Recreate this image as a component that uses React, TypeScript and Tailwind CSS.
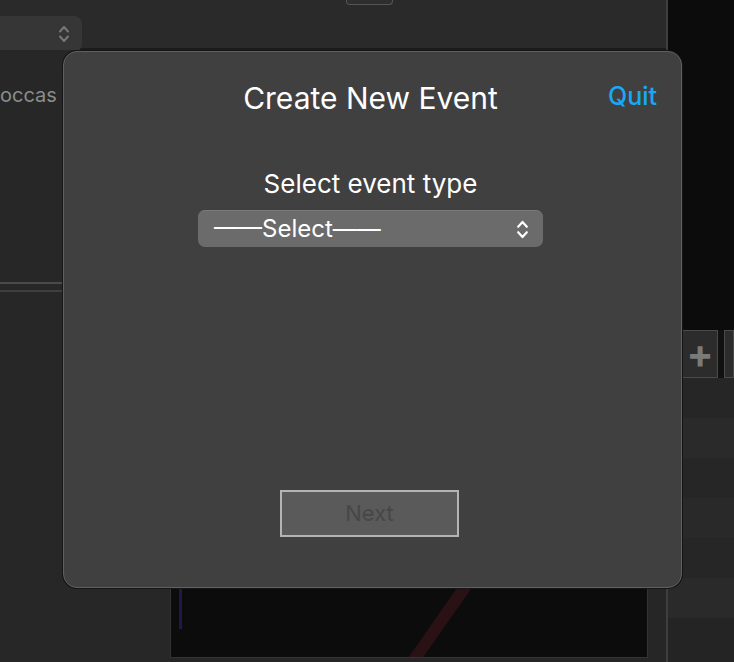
import React from 'react'

// chevron pair used by macOS popup buttons
function UpDown({ className }: { className?: string }) {
  return (
    <svg viewBox="0 0 12 20" className={className} fill="none" stroke="currentColor" strokeWidth="2" strokeLinecap="round" strokeLinejoin="round">
      <path d="M2 7.5 L6 3 L10 7.5" />
      <path d="M2 12.5 L6 17 L10 12.5" />
    </svg>
  )
}

export default function App() {
  return (
    <div
      className="relative w-[734px] h-[662px] overflow-hidden bg-[#262626] flex"
      style={{ fontFamily: 'Inter, "Noto Sans", sans-serif' }}
    >
      {/* main window area behind the sheet */}
      <div className="w-[668px] flex flex-col border-r-2 border-[#3e3e3e]">
        <div className="h-[50px] bg-[#2a2a2a] border-b-2 border-[#1b1b1b] flex items-start">
          <div className="mt-4 w-[82px] h-[36px] bg-[#363636] rounded-r-lg flex items-center justify-end pr-3 text-[#777]">
            <UpDown className="w-3 h-5" />
          </div>
          <div className="ml-[264px] w-[47px] h-[5px] border border-t-0 border-[#555] rounded-b-sm bg-[#2e2e2e]" />
        </div>
        <div className="flex-1 flex">
          <div className="w-[170px] flex flex-col bg-[#272727]">
            <div className="pt-[30px] text-[20px] text-[#8c8c8c] whitespace-nowrap">occas</div>
            <div className="mt-[172px] h-[2px] bg-[#4a4a4a]" />
            <div className="mt-[6px] h-[2px] bg-[#3e3e3e]" />
          </div>
          <div className="flex-1 flex flex-col">
            <div className="flex-1" />
            <div className="h-[72px] mb-[4px] mr-[18px] bg-[#0c0c0c] border border-[#333] relative overflow-hidden">
              <div className="absolute left-[8px] top-[2px] w-[3px] h-[40px] bg-[#1d1a4a]" />
              <div className="absolute left-[260px] -top-[10px] w-[12px] h-[100px] bg-[#2a1214] rotate-[35deg]" />
            </div>
          </div>
        </div>
      </div>

      {/* right side panel */}
      <div className="flex-1 flex flex-col">
        <div className="h-[330px] bg-[#0c0c0c]" />
        <div className="h-[48px] flex gap-[6px] pl-[14px] bg-[#111]">
          <div className="w-[36px] border border-[#4a4a4a] bg-[#2c2c2c] flex items-center justify-center text-[#7a7a7a] text-[40px] leading-none font-bold">
            +
          </div>
          <div className="flex-1 border border-[#4a4a4a] bg-[#2c2c2c]" />
        </div>
        <div className="flex-1 flex flex-col bg-[#242424]">
          <div className="h-[40px] bg-[#262626]" />
          <div className="h-[40px] bg-[#2a2a2a]" />
          <div className="h-[40px] bg-[#262626]" />
          <div className="h-[40px] bg-[#292929]" />
          <div className="h-[40px] bg-[#262626]" />
          <div className="h-[40px] bg-[#2a2a2a]" />
        </div>
      </div>

      {/* sheet dialog */}
      <div className="absolute left-[63px] top-[51px] w-[619px] h-[537px] rounded-[14px] bg-[#404040] border border-[#606060] shadow-[0_0_0_1px_#151515] flex flex-col items-center">
        <div className="relative w-full mt-[27px] h-[38px] flex items-center justify-center">
          <div className="mr-[4px] text-[30px] text-white leading-none">Create New Event</div>
          <div className="absolute right-[24px] top-[5px] text-[25px] font-medium text-[#1aa8f5] leading-none">Quit</div>
        </div>
        <div className="mt-[51px] mr-[4px] text-[26px] leading-[32px] text-white">Select event type</div>
        <div className="mt-[10px] mr-[4px] w-[345px] h-[37px] rounded-[7px] bg-[#6b6b6b] border-t border-[#7a7a7a] flex items-center pl-[16px] pr-[14px] text-white">
          <span className="text-[24px] leading-none">——Select——</span>
          <div className="flex-1" />
          <UpDown className="w-[13px] h-[23px]" />
        </div>
        <div className="mt-[243px] mr-[6px] w-[179px] h-[47px] border-2 border-[#b4b4b4] bg-[#5a5a5a] flex items-center justify-center text-[22px] text-[#474747]">
          Next
        </div>
      </div>
    </div>
  )
}
